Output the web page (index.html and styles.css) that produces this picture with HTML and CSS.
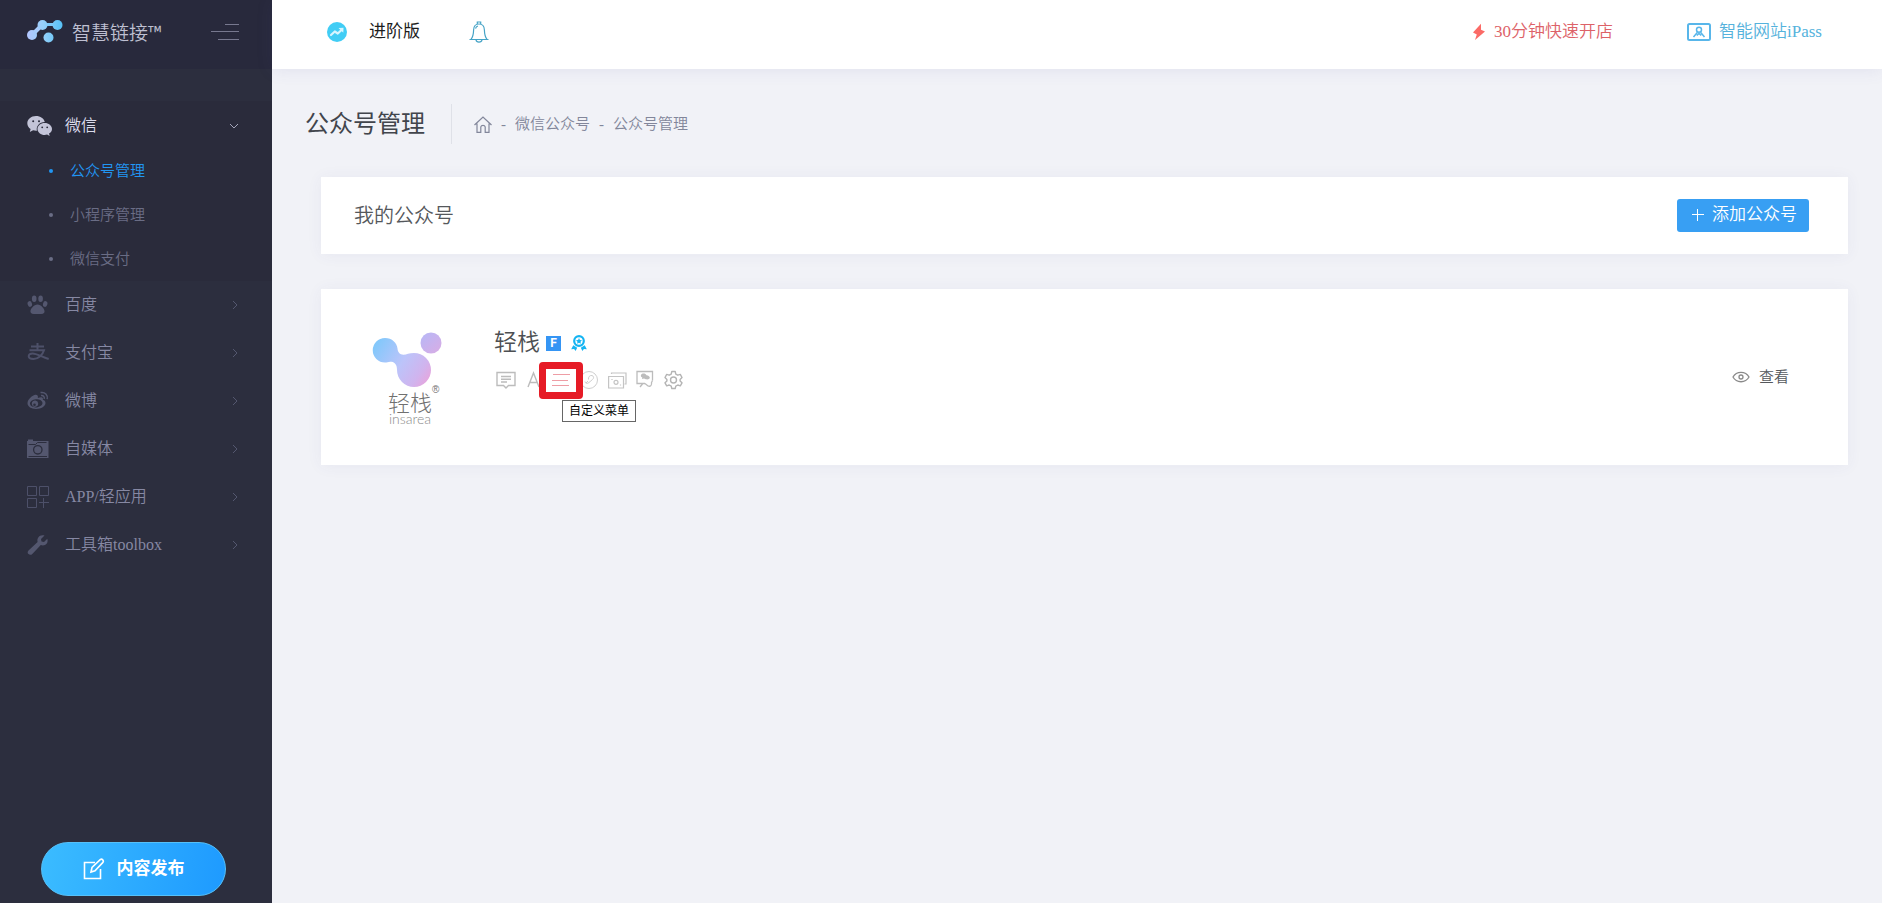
FILE: index.html
```html
<!DOCTYPE html>
<html lang="zh-CN">
<head>
<meta charset="utf-8">
<meta name="viewport" content="width=device-width, initial-scale=1">
<title>公众号管理</title>
<link rel="stylesheet" href="styles.css">
</head>
<body>
<div class="app">
  <aside class="sidebar">
    <div class="brand">
      <svg class="brand-mark" width="36" height="24" viewBox="0 0 36 24">
        <defs><linearGradient id="bm" x1="0" x2="36" y1="0" y2="0" gradientUnits="userSpaceOnUse"><stop offset="0" stop-color="#b4c6ff"/><stop offset=".45" stop-color="#96d0fa"/><stop offset="1" stop-color="#55c0f6"/></linearGradient></defs>
        <path d="M5 15 15 5" stroke="#a8cbfc" stroke-width="4" fill="none"/>
        <path d="M15 4.500H31" stroke="#7cc8f8" stroke-width="3" fill="none"/>
        <g fill="url(#bm)"><circle cx="5" cy="15" r="5"/><circle cx="15.500" cy="5" r="5"/><circle cx="30.500" cy="5" r="5"/><circle cx="21.500" cy="17.500" r="5"/></g>
      </svg>
      <span class="brand-name">智慧链接™</span>
      <button class="collapse" type="button" aria-label="收起菜单">
        <svg width="28" height="17" viewBox="0 0 28 17" stroke="#77788f" stroke-width="1"><path d="M14 1.500h14M0 8.500h28M7 16.500h21"/></svg>
      </button>
    </div>
    <nav class="nav">
      <section class="group open">
        <a class="item" href="#">
          <svg class="item-icon" width="26" height="22" viewBox="0 0 26 22"><path fill="#c3c4d8" d="M9 1C4 1 .3 4.300.3 8.300c0 2.400 1.300 4.400 3.300 5.800L2.800 17l3.300-1.700c1 .2 2 .4 3.100.4h.7C8.800 11.200 12.500 7 17.800 7 17 3.500 13.400 1 9 1z"/><path fill="#c3c4d8" d="M25 13.900c0-3.300-3.300-6-7.300-6s-7.200 2.700-7.200 6 3.200 6 7.200 6c.8 0 1.600-.1 2.400-.4l2.600 1.400-.7-2.300c1.800-1 3-2.700 3-4.700z"/><g fill="#2a2b3b"><circle cx="6.200" cy="6.200" r="1"/><circle cx="12" cy="6.200" r="1"/><circle cx="15.200" cy="12.300" r=".9"/><circle cx="20.200" cy="12.300" r=".9"/></g></svg>
          <span class="item-label">微信</span>
          <svg class="arrow" width="10" height="10" viewBox="0 0 10 10" fill="none" stroke="#a4a5ba"><path d="m1 3 4 4 4-4"/></svg>
        </a>
        <ul class="sub">
          <li><a class="sub-item active" href="#">公众号管理</a></li>
          <li><a class="sub-item" href="#">小程序管理</a></li>
          <li><a class="sub-item" href="#">微信支付</a></li>
        </ul>
      </section>
      <a class="item" href="#">
        <svg class="item-icon" width="22" height="22" viewBox="0 0 22 22" fill="#54576f"><ellipse cx="2.800" cy="10" rx="2.200" ry="2.900" transform="rotate(-15 2.800 10)"/><ellipse cx="7.200" cy="4.800" rx="2.300" ry="3.300"/><ellipse cx="13.600" cy="4.800" rx="2.300" ry="3.300"/><ellipse cx="18.200" cy="10" rx="2.200" ry="2.900" transform="rotate(15 18.200 10)"/><path d="M10.500 10.500c-3.500 0-7.500 4.500-7 7.500.4 2.200 3 2 7 2s6.600.2 7-2c.5-3-3.500-7.500-7-7.500z"/></svg>
        <span class="item-label">百度</span>
        <svg class="arrow" width="10" height="10" viewBox="0 0 10 10" fill="none" stroke="#54576f"><path d="m4 1 4 4-4 4"/></svg>
      </a>
      <a class="item" href="#">
        <svg class="item-icon" width="22" height="22" viewBox="0 0 22 22" fill="none" stroke="#4d5069" stroke-width="2"><path d="M4 4.500h13M10.500 1v7M2.500 8.200h14.500c-1.500 5-6 8.800-10.500 8.800-3.200 0-4.800-1.200-4.800-2.700 0-1.700 1.700-2.800 4-2.800 4 0 9 3.500 16 5.500"/></svg>
        <span class="item-label">支付宝</span>
        <svg class="arrow" width="10" height="10" viewBox="0 0 10 10" fill="none" stroke="#54576f"><path d="m4 1 4 4-4 4"/></svg>
      </a>
      <a class="item" href="#">
        <svg class="item-icon" width="22" height="22" viewBox="0 0 22 22"><path fill="#54576f" fill-rule="evenodd" d="M8.500 4.800C5.500 5 .5 9.500.5 13.300c0 3.500 4 5.700 8.500 5.700 5.300 0 9.500-2.800 9.500-6 0-1.800-1.200-2.900-2.700-3.300.7-2.200-.8-3.400-5-1.700.5-1.700-.1-3.300-2.300-3.200zM9 9.200c3.500-.3 6.300 1.300 6.500 3.600s-2.600 4.300-6.100 4.600-6.200-1.300-6.400-3.600 2.500-4.300 6-4.600z"/><path fill="#54576f" fill-rule="evenodd" d="M8.500 10.500a3.200 3.200 0 1 0 .1 6.300 3.200 3.200 0 0 0-.1-6.300zm-1 3a1.300 1.300 0 1 1 0 2.600 1.300 1.300 0 0 1 0-2.600z"/><path fill="none" stroke="#54576f" stroke-width="1.500" d="M13.500 2.600c4.500-1 7.600 2.500 6.700 6.600M14 5.600c2.300-.4 3.700 1 3.200 3.200"/></svg>
        <span class="item-label">微博</span>
        <svg class="arrow" width="10" height="10" viewBox="0 0 10 10" fill="none" stroke="#54576f"><path d="m4 1 4 4-4 4"/></svg>
      </a>
      <a class="item" href="#">
        <svg class="item-icon" width="22" height="22" viewBox="0 0 22 22"><path fill="#54576f" d="M0 3h1V1.500h5V3h15.500v17H0z"/><path d="M1.500 6.500h7l2-2h9M1.500 18.500h18.500" stroke="#2c2e3e" fill="none"/><circle cx="10.800" cy="11.800" r="4.200" fill="none" stroke="#2c2e3e" stroke-width="1.300"/></svg>
        <span class="item-label">自媒体</span>
        <svg class="arrow" width="10" height="10" viewBox="0 0 10 10" fill="none" stroke="#54576f"><path d="m4 1 4 4-4 4"/></svg>
      </a>
      <a class="item" href="#">
        <svg class="item-icon" width="22" height="22" viewBox="0 0 22 22" fill="none" stroke="#4d5069"><path d="M.5.5h9v9h-9zM12.500.5h9v9h-9zM.5 12.500h9v9h-9zM16.500 12v10M12 16.500h10"/></svg>
        <span class="item-label">APP/轻应用</span>
        <svg class="arrow" width="10" height="10" viewBox="0 0 10 10" fill="none" stroke="#54576f"><path d="m4 1 4 4-4 4"/></svg>
      </a>
      <a class="item" href="#">
        <svg class="item-icon" width="22" height="22" viewBox="0 0 22 22"><path fill="#54576f" d="M17.500 1.500 14 5l.5 2.500L17 8l3.300-3.300c1 3-.3 5.300-2.300 6.300-1.500.7-3 .5-4.200.1L5.300 20c-1.200 1.200-2.800 1-3.800.1s-1.200-2.500 0-3.700L10.600 8c-1-3.700 1.700-7.800 6.900-6.500z"/></svg>
        <span class="item-label">工具箱toolbox</span>
        <svg class="arrow" width="10" height="10" viewBox="0 0 10 10" fill="none" stroke="#54576f"><path d="m4 1 4 4-4 4"/></svg>
      </a>
    </nav>
    <div class="sidebar-foot">
      <button class="publish" type="button">
        <svg width="22" height="22" viewBox="0 0 22 22" fill="none" stroke="#fff" stroke-width="1.600"><path d="M12 4.500H1.500v16h16V11"/><path d="m8 14 1-4.500 8.200-7.800c1.800-1.400 4 .8 2.700 2.700L12 12.700z"/></svg>
        内容发布
      </button>
    </div>
  </aside>

  <div class="main">
    <header class="topbar">
      <div class="plan">
        <svg width="20" height="20" viewBox="0 0 20 20"><circle cx="10" cy="10" r="10" fill="#41cdf5"/><path d="m4 13 3.800-3.500 3 2 3.700-3.500" fill="none" stroke="#d6f5ff" stroke-width="2.200" stroke-linejoin="round" stroke-linecap="round"/><path d="m11.500 6 5-.2-.2 5z" fill="#d6f5ff"/></svg>
        <span>进阶版</span>
      </div>
      <button class="bell" type="button" aria-label="通知">
        <svg width="20" height="22" viewBox="0 0 20 22" fill="none" stroke="#45a3c6" stroke-width="1.200"><path d="M8.300 3V1h3.400v2M.5 18.500h19M2 18.300c2-2.300 2.500-4.800 2.600-9.300.1-3.800 2.100-6 5.400-6s5.300 2.200 5.400 6c.1 4.500.6 7 2.600 9.300M7 18.800c.5 3 5.500 3 6 0M6.500 7.500C6.900 6 7.600 5.300 9 5"/></svg>
      </button>
      <div class="top-links">
        <a class="quick" href="#">
          <svg width="14" height="18" viewBox="0 0 14 18"><path fill="#fb6a66" d="M9 .8 1 9.600l3.800 1.900L3 17l10-8.500-4-1.700z"/></svg>
          30分钟快速开店
        </a>
        <a class="ipass" href="#">
          <svg width="24" height="18" viewBox="0 0 24 18" fill="none" stroke="#58b6ea" stroke-width="2"><rect x="1" y="1" width="22" height="16" rx="1.500"/><circle cx="12" cy="6.800" r="2.500" stroke-width="1.500"/><path d="m6.500 14 4-4.800M17.500 14l-4-4.800M9.800 12.500l2.200-2 2.200 2" stroke-width="1.500"/></svg>
          智能网站iPass
        </a>
      </div>
    </header>

    <div class="page-head">
      <h1 class="page-title">公众号管理</h1>
      <nav class="crumbs" aria-label="面包屑">
        <a href="#" aria-label="首页"><svg width="18" height="17" viewBox="0 0 18 17" fill="none" stroke="#82869a" stroke-width="1.200"><path d="M.5 9 9 1l8.500 8M3 7.500v8.800h3.800v-5.500c.6-2 3.800-2 4.400 0v5.500H15V7.500"/></svg></a>
        <span>-</span>
        <a href="#">微信公众号</a>
        <span>-</span>
        <a href="#">公众号管理</a>
      </nav>
    </div>

    <main class="content">
      <section class="card card-head">
        <h2 class="card-title">我的公众号</h2>
        <button class="add" type="button">
          <svg width="12" height="12" viewBox="0 0 12 12" stroke="#fff"><path d="M0 5.500h12M5.500 0v12"/></svg>
          添加公众号
        </button>
      </section>

      <section class="card account">
        <div class="account-logo">
          <svg width="76" height="58" viewBox="0 0 76 58">
            <defs>
              <linearGradient id="ml" x1="4" y1="16" x2="62" y2="54" gradientUnits="userSpaceOnUse"><stop offset="0" stop-color="#84c8fb"/><stop offset=".45" stop-color="#bcc4fa"/><stop offset=".75" stop-color="#d0b4ee"/><stop offset="1" stop-color="#f09fd6"/></linearGradient>
              <linearGradient id="mr" x1="54" y1="4" x2="72" y2="24" gradientUnits="userSpaceOnUse"><stop offset="0" stop-color="#bcb6f4"/><stop offset="1" stop-color="#dcabe2"/></linearGradient>
            </defs>
            <path fill="url(#ml)" d="M15 6C22 6 27 11 27.500 16.500c.2 3.500 2.500 6.300 6 6.200 3-.1 5.500-1.700 10.500-1.700a17 17 0 1 1-17 17c0-4.500-1.500-7.500-5.500-8.200C19 29.300 17 30.500 15 30.500A12.200 12.200 0 0 1 15 6z"/>
            <circle cx="61" cy="11" r="10.500" fill="url(#mr)"/>
          </svg>
          <span class="logo-cn">轻栈<sup>®</sup></span>
          <span class="logo-en">insarea</span>
        </div>
        <div class="account-info">
          <div class="account-name">
            <h3>轻栈</h3>
            <span class="badge-f">F</span>
            <svg width="16" height="16" viewBox="0 0 16 16"><circle cx="8" cy="6" r="4.800" fill="none" stroke="#14b4f2" stroke-width="2.200"/><path fill="#14b4f2" d="m8 3 .9 1.900 2.100.3-1.500 1.500.4 2.100L8 7.800l-1.900 1 .4-2.100L5 5.200l2.100-.3zM2.300 10.200l3.900 2.500L4.600 16l-1.500-2-2.900.2zM13.700 10.200l-3.900 2.500 1.600 3.300 1.500-2 2.900.2z"/></svg>
          </div>
          <div class="tools">
            <button class="tool" type="button" aria-label="消息"><svg width="20" height="20" viewBox="0 0 20 20" fill="none" stroke="#bcbcbc" stroke-width="1.400"><path d="M1 2.500h18v13h-6.500L10 18l-2.500-2.500H1zM5 6.500h10M5 9.300h10M5 12h6"/></svg></button>
            <button class="tool" type="button" aria-label="自动回复"><svg width="20" height="20" viewBox="0 0 20 20" fill="none" stroke="#bcbcbc" stroke-width="1.400"><path d="M4 17 9.500 3 15 17M6 12.500h7"/></svg></button>
            <button class="tool current" type="button" aria-label="自定义菜单" aria-describedby="tip"><svg width="20" height="20" viewBox="0 0 20 20" stroke="#ee9da5" fill="none"><path d="M1 4.500h17M0 10.500h16M0 15.500h17"/></svg><span class="tip" id="tip" role="tooltip">自定义菜单</span></button>
            <button class="tool" type="button" aria-label="链接"><svg width="20" height="20" viewBox="0 0 20 20" fill="none" stroke="#cfcfcf"><circle cx="9" cy="10" r="8.500"/><path d="m6 13 2-2M8.500 9.500c-.5-2.500 1.500-4.500 3.500-4s2 3 .5 4l-3.500 3c-1.500 1.500-4 1-4-1"/></svg></button>
            <button class="tool" type="button" aria-label="素材"><svg width="20" height="20" viewBox="0 0 20 20" fill="none" stroke="#c4c4c4" stroke-width="1.200"><path d="M3.500 4V3H18v11h-1.500M.6 6.500h14.900V18H.6z"/><circle cx="8" cy="12.300" r="2"/><path d="M4 9v1M12.500 14.500v1"/></svg></button>
            <button class="tool" type="button" aria-label="群发"><svg width="20" height="20" viewBox="0 0 20 20" fill="none" stroke="#bcbcbc" stroke-width="1.300"><path d="M9 13.500H1V1.500h15.500v9M4 17l2.500-3"/><path fill="#bcbcbc" d="M5 5c1-2 4.500-2 5.500.2 2 .2 3.500 1.300 3.300 2.600s-2 2-4 1.500L8 8.500 6 9l.3-1.500C5 7 4.600 6 5 5z" stroke="none"/><path d="m9 13.500 3 2.500c2.500 1 4-1 3.500-3.500l1-2"/></svg></button>
            <button class="tool" type="button" aria-label="设置"><svg width="20" height="20" viewBox="0 0 20 20" fill="none" stroke="#b4b4b4" stroke-width="1.400"><circle cx="9.500" cy="10" r="3"/><path stroke-linejoin="round" d="M7.800 1.500h3.400l.6 2.600 2 1.100 2.500-.8L18 7.500l-1.900 1.900v1.600l1.900 1.800-1.700 3-2.500-.8-2 1.100-.6 2.400H7.800l-.6-2.400-2-1.100-2.500.8-1.700-3 1.900-1.800V9.400L1 7.500l1.700-3.100 2.500.8 2-1.100z"/></svg></button>
          </div>
        </div>
        <a class="view" href="#">
          <svg width="18" height="12" viewBox="0 0 18 12" fill="none" stroke="#8a8a8a" stroke-width="1.300"><path d="M1 6c3.500-6.300 12.500-6.300 16 0-3.500 6.300-12.500 6.300-16 0z"/><circle cx="9" cy="6" r="2"/></svg>
          查看
        </a>
      </section>
    </main>
  </div>
</div>
</body>
</html>
```
FILE: styles.css
```css
* { box-sizing: border-box; }

body {
  margin: 0;
  font-family: "Liberation Serif", "Noto Sans CJK SC", sans-serif;
  font-weight: 350;
  font-size: 15px;
  line-height: 24px;
  color: #45474f;
  background: #f1f2f7;
}

a { color: inherit; text-decoration: none; }
button { font: inherit; color: inherit; border: 0; padding: 0; background: none; cursor: pointer; }
h1, h2, h3 { margin: 0; font-weight: inherit; }
svg { display: block; flex: none; }

.app { display: flex; min-height: 100vh; }

/* Sidebar */
.sidebar {
  flex: none;
  width: 272px;
  display: flex;
  flex-direction: column;
  background: #2c2e3e;
}
.brand {
  display: flex;
  align-items: center;
  height: 69px;
  padding: 0 33px 6px 27px;
  background: #28293c;
}
.brand-name {
  margin-left: 9px;
  font-family: "Noto Sans CJK SC", sans-serif;
  font-size: 19px;
  color: #bfc0d2;
}
.collapse { margin-left: auto; }

.nav { padding-top: 32px; }
.open { background: #2a2b3b; }
.item {
  display: flex;
  align-items: center;
  height: 48px;
  padding: 0 33px 0 27px;
  font-size: 16px;
  color: #8688a3;
}
.item-icon { margin-right: 16px; }
.item-label { flex: 1; }
.open .item { padding-top: 2px; color: #dcdcec; }
.open .item-icon { margin-right: 12px; }

.sub { margin: 0; padding: 0; list-style: none; }
.sub-item {
  display: flex;
  align-items: center;
  gap: 17px;
  height: 44px;
  padding-left: 49px;
  color: #6a6d85;
}
.sub-item::before {
  content: "";
  width: 4px;
  height: 4px;
  border-radius: 50%;
  background: currentColor;
}
.sub-item.active { color: #2196f3; }

.sidebar-foot { margin-top: auto; padding: 0 46px 7px 41px; }
.publish {
  display: flex;
  align-items: center;
  justify-content: center;
  gap: 12px;
  width: 100%;
  height: 54px;
  border: 1px solid #56c0f8;
  border-radius: 27px;
  background: linear-gradient(100deg, #3bbcff, #1e9aff);
  font-size: 17px;
  font-weight: 700;
  color: #fff;
}

/* Top bar */
.main { flex: 1; min-width: 0; }
.topbar {
  display: flex;
  align-items: center;
  height: 69px;
  padding: 0 60px 6px 55px;
  background: #fff;
  box-shadow: 0 1px 16px rgba(80, 80, 160, .1);
  font-size: 17px;
}
.plan { display: flex; align-items: center; gap: 22px; font-weight: 400; color: #1c1c1c; }
.bell { margin-left: 49px; }
.top-links { display: flex; gap: 74px; margin-left: auto; }
.quick, .ipass { display: flex; align-items: center; gap: 8px; }
.quick { color: #dd6268; }
.ipass { color: #55b2dc; }

/* Page heading */
.page-head { display: flex; align-items: center; padding: 35px 33px 0; }
.page-title {
  padding-right: 26px;
  font-size: 24px;
  font-weight: 400;
  line-height: 40px;
  color: #42454c;
  border-right: 1px solid #dfe1e8;
}
.crumbs {
  display: flex;
  align-items: center;
  gap: 9px;
  margin-left: 22px;
  color: #82869a;
}

/* Cards */
.content {
  display: flex;
  flex-direction: column;
  gap: 35px;
  padding: 33px 34px 40px 49px;
}
.card { background: #fff; box-shadow: 0 1px 15px rgba(70, 70, 130, .06); }
.card-head {
  display: flex;
  align-items: center;
  justify-content: space-between;
  padding: 22px 39px 22px 33px;
}
.card-title { font-size: 20px; color: #55585c; }
.add {
  display: flex;
  align-items: center;
  gap: 8px;
  height: 33px;
  padding: 0 12px 2px 15px;
  border-radius: 3px;
  background: #389ff3;
  font-size: 17px;
  color: #fff;
}

.account {
  display: flex;
  align-items: flex-start;
  padding: 39px 59px 39px 49px;
}
.account-logo {
  display: flex;
  flex-direction: column;
  align-items: center;
  width: 80px;
  padding-top: 4px;
  font-family: "Noto Sans CJK SC", sans-serif;
  font-weight: 300;
  color: #707070;
}
.account-logo svg { align-self: flex-start; }
.logo-cn { position: relative; font-size: 22px; line-height: 22px; }
.logo-cn sup {
  position: absolute;
  left: 100%;
  top: -8px;
  font-family: "Liberation Sans", sans-serif;
  font-size: 10px;
  line-height: 16px;
}
.logo-en {
  font-family: Lato, sans-serif;
  font-size: 14px;
  line-height: 14px;
  color: #8b8b8b;
}
.account-info { flex: 1; margin-left: 44px; }
.account-name { display: flex; align-items: center; gap: 10px; }
.account-name h3 { margin-right: -4px; font-size: 23px; line-height: 30px; color: #4d4f52; }
.badge-f {
  width: 15px;
  height: 15px;
  background: #3595f4;
  font: 700 12px/15px Roboto, sans-serif;
  text-align: center;
  color: #fff;
}
.tools { display: flex; gap: 8px; padding: 12px 2px 0; }
.tool { position: relative; height: 20px; }
.current::before {
  content: "";
  position: absolute;
  inset: -8px -11px -9px -13px;
  border: 7px solid #e61b26;
  border-radius: 4px;
  background: #fff;
  z-index: 1;
}
.current svg { position: relative; z-index: 2; }
.tip {
  position: absolute;
  z-index: 3;
  left: 10px;
  top: 30px;
  padding: 0 6px;
  border: 1px solid #666;
  background: #fff;
  font-size: 12px;
  font-weight: 400;
  line-height: 20px;
  white-space: nowrap;
  color: #000;
}
.view { display: flex; align-items: center; align-self: center; gap: 9px; color: #55585c; }
```
